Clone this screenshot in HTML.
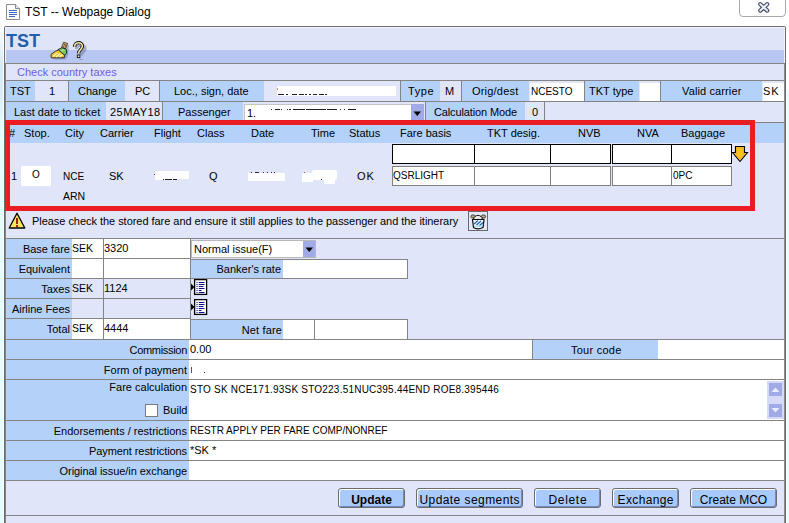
<!DOCTYPE html>
<html><head><meta charset="utf-8"><style>
html,body{margin:0;padding:0;width:789px;height:523px;overflow:hidden;background:#fff;position:relative}
body>div{position:absolute;box-sizing:content-box}
.t{white-space:nowrap;font-family:"Liberation Sans",sans-serif}
.btn{border:1px solid #6c6c6c;border-radius:3px;background:#a8cafc;box-shadow:inset 1px 1px 0 #fff,inset -1px -1px 0 #7888c0;
font-family:"Liberation Sans",sans-serif;font-size:12px;line-height:18px;text-align:center;color:#000;white-space:nowrap}
</style></head><body>
<div style="left:0px;top:26px;width:4px;height:497px;background:#e6fdff;"></div>
<div style="left:3px;top:26px;width:1px;height:497px;background:#ffffff;"></div>
<div style="left:786px;top:90px;width:3px;height:433px;background:#e6fdff;"></div>
<div style="left:786px;top:26px;width:1px;height:497px;background:#ffffff;"></div>
<div style="left:0px;top:26px;width:3px;height:104px;background:linear-gradient(#ffffff,#d4e8f6 40%,#dcf0fa 70%,#e6fdff);"></div>
<svg style="position:absolute;left:6px;top:4px" width="14" height="16" viewBox="0 0 14 16"><path d="M0.5 0.5 H9.5 L13.5 4.5 V15.5 H0.5 Z" fill="#fff" stroke="#8a8a8a"/><path d="M9.5 0.5 V4.5 H13.5" fill="#e8e8e8" stroke="#8a8a8a"/><path d="M3 6.5H11M3 8.5H11M3 10.5H11M3 12.5H9" stroke="#3a6cc8" stroke-width="1"/></svg>
<div class="t" style="left:25px;top:6px;font-size:12px;line-height:12px;font-weight:400;color:#000;">TST -- Webpage Dialog</div>
<div style="left:739px;top:-3px;width:45px;height:18px;border:1px solid #a9a9a9;border-radius:0 0 4px 4px;background:#fff"></div>
<svg style="position:absolute;left:757px;top:1px" width="14" height="12" viewBox="0 0 14 12"><path d="M3.3 3.2 L10.2 9.6 M10.2 3.2 L3.3 9.6" stroke="#3c4660" stroke-width="4.2" stroke-linecap="round"/><path d="M3.3 3.2 L10.2 9.6 M10.2 3.2 L3.3 9.6" stroke="#eceef4" stroke-width="2.1" stroke-linecap="round"/></svg>
<div style="left:4px;top:26px;width:782px;height:497px;background:#6e6e6e;border-radius:2px 2px 0 0"></div>
<div style="left:5px;top:27px;width:780px;height:496px;background:#f0f2ff;"></div>
<div style="left:6px;top:28px;width:778px;height:22px;background:#e0e4f8;"></div>
<div style="left:6px;top:50px;width:778px;height:13px;background:#b8c6f4;"></div>
<div style="left:5px;top:63px;width:780px;height:460px;background:#848484;"></div>
<div style="left:6px;top:64px;width:778px;height:459px;background:#e1e5fa;"></div>
<div style="left:784px;top:63px;width:1px;height:460px;background:#8a8a8a;"></div>
<div style="left:785px;top:63px;width:1px;height:460px;background:#646c6c;"></div>
<div style="left:4px;top:63px;width:1px;height:460px;background:#6a6a6a;"></div>
<div class="t" style="left:6px;top:32px;font-size:18px;line-height:18px;font-weight:700;color:#1f5fae;">TST</div>
<svg style="position:absolute;left:48px;top:38px" width="24" height="24" viewBox="0 0 24 24"><path d="M18 6 L21 7 L20.5 13 L19.5 19 L17.5 21.5 L5 21.5 L5 20.5 L17 18 Z" fill="#3a4470" opacity="0.3"/><path d="M15.5 4.3 L19.6 5.4 L17.4 10.8 L13.4 9.6 Z" fill="#c49a68" stroke="#2a2018" stroke-width="0.7"/><circle cx="16.6" cy="6.6" r="0.7" fill="#6a4a28"/><circle cx="17.8" cy="7.6" r="0.6" fill="#6a4a28"/><circle cx="15.6" cy="8.8" r="0.6" fill="#6a4a28"/><path d="M10 11.6 L14 9.8 L18.2 11 L18.7 15.2 L16.2 17.4 L12.8 15 Z" fill="#74c864" stroke="#101010" stroke-width="0.8"/><path d="M13 12 L15 13 M14.5 11.5 L16.5 12.5" stroke="#c8f0b8" stroke-width="0.8"/><path d="M3 16.4 L7.5 13.2 L10.5 12 L13.5 14.6 L16.6 17.2 L16.2 19.8 L3.2 19.8 Z" fill="#f2c428" stroke="#101010" stroke-width="0.8"/><path d="M5 18.5 L9 15 M8 19 L12 15.5 M11.5 19 L14.5 16.5" stroke="#fff6c8" stroke-width="1.2"/></svg>
<svg style="position:absolute;left:46px;top:36px" width="44" height="26" viewBox="0 0 44 26"><path d="M30.5 13 C30.5 8 39 7.8 39 12.5 C39 15.5 35 16 35 19.5 M35 23 v1" fill="none" stroke="#404a70" stroke-width="3.4" opacity="0.35"/><path d="M28.6 10.8 C28.6 5.5 36.4 5.3 36.4 10.3 C36.4 13.3 32.6 14 32.6 17.2" fill="none" stroke="#101010" stroke-width="3.4"/><path d="M28.6 10.8 C28.6 5.5 36.4 5.3 36.4 10.3 C36.4 13.3 32.6 14 32.6 17.2" fill="none" stroke="#f6f0a0" stroke-width="1.5"/><path d="M30.8 9.6 C31.2 7.8 34.2 7.8 34.4 9.9" fill="none" stroke="#8a8a9a" stroke-width="1.1"/><rect x="31.3" y="19" width="2.6" height="2.6" fill="#f6f0a0" stroke="#101010" stroke-width="0.9"/></svg>
<div class="t" style="left:17px;top:67px;font-size:11px;line-height:11px;font-weight:400;color:#6a5cf0;">Check country taxes</div>
<div style="left:6px;top:80px;width:778px;height:1px;background:#848484;"></div>
<div style="left:6px;top:81px;width:29px;height:20px;background:#b4d2f9;"></div>
<div style="left:35px;top:81px;width:33px;height:20px;background:#e1e5fa;"></div>
<div style="left:68px;top:81px;width:1px;height:20px;background:#848484;"></div>
<div style="left:69px;top:81px;width:56px;height:20px;background:#b4d2f9;"></div>
<div style="left:125px;top:81px;width:34px;height:20px;background:#e1e5fa;"></div>
<div style="left:159px;top:81px;width:1px;height:20px;background:#848484;"></div>
<div style="left:160px;top:81px;width:104px;height:20px;background:#b4d2f9;"></div>
<div style="left:264px;top:81px;width:136px;height:20px;background:#e1e5fa;"></div>
<div style="left:400px;top:81px;width:1px;height:20px;background:#848484;"></div>
<div style="left:277px;top:86px;width:119px;height:10px;background:#ffffff;"></div>
<div style="left:401px;top:81px;width:39px;height:20px;background:#b4d2f9;"></div>
<div style="left:440px;top:81px;width:21px;height:20px;background:#e1e5fa;"></div>
<div style="left:461px;top:81px;width:1px;height:20px;background:#848484;"></div>
<div style="left:462px;top:81px;width:67px;height:20px;background:#b4d2f9;"></div>
<div style="left:529px;top:81px;width:55px;height:20px;background:#e1e5fa;"></div>
<div style="left:530px;top:83px;width:54px;height:18px;background:#fff;"></div>
<div style="left:584px;top:81px;width:1px;height:20px;background:#848484;"></div>
<div style="left:585px;top:81px;width:54px;height:20px;background:#b4d2f9;"></div>
<div style="left:639px;top:81px;width:21px;height:20px;background:#e1e5fa;"></div>
<div style="left:640px;top:83px;width:20px;height:18px;background:#fff;"></div>
<div style="left:660px;top:81px;width:1px;height:20px;background:#848484;"></div>
<div style="left:661px;top:81px;width:101px;height:20px;background:#b4d2f9;"></div>
<div style="left:762px;top:81px;width:22px;height:20px;background:#e1e5fa;"></div>
<div style="left:763px;top:83px;width:21px;height:18px;background:#fff;"></div>
<div style="left:6px;top:101px;width:778px;height:1px;background:#848484;"></div>
<div class="t" style="left:10px;top:86px;font-size:11px;line-height:11px;font-weight:400;color:#000;">TST</div>
<div class="t" style="left:49px;top:86px;font-size:11px;line-height:11px;font-weight:400;color:#000;">1</div>
<div class="t" style="left:78px;top:86px;font-size:11px;line-height:11px;font-weight:400;color:#000;">Change</div>
<div class="t" style="left:135px;top:86px;font-size:11px;line-height:11px;font-weight:400;color:#000;">PC</div>
<div class="t" style="left:174px;top:86px;font-size:11px;line-height:11px;font-weight:400;color:#000;">Loc., sign, date</div>
<div class="t" style="left:408px;top:86px;font-size:11px;line-height:11px;font-weight:400;color:#000;letter-spacing:0.6px">Type</div>
<div class="t" style="left:445px;top:86px;font-size:11px;line-height:11px;font-weight:400;color:#000;">M</div>
<div class="t" style="left:472px;top:86px;font-size:11px;line-height:11px;font-weight:400;color:#000;letter-spacing:0.2px">Orig/dest</div>
<div class="t" style="left:531px;top:87px;font-size:10px;line-height:10px;font-weight:400;color:#000;">NCESTO</div>
<div class="t" style="left:589px;top:86px;font-size:11px;line-height:11px;font-weight:400;color:#000;">TKT type</div>
<div class="t" style="left:682px;top:86px;font-size:11px;line-height:11px;font-weight:400;color:#000;letter-spacing:0.12px">Valid carrier</div>
<div class="t" style="left:763px;top:86px;font-size:11px;line-height:11px;font-weight:400;color:#000;letter-spacing:1px">SK</div>
<div style="left:278px;top:94px;width:6px;height:1px;background:#202020;"></div>
<div style="left:286px;top:94px;width:2px;height:1px;background:#202020;"></div>
<div style="left:292px;top:94px;width:5px;height:1px;background:#202020;"></div>
<div style="left:299px;top:94px;width:5px;height:1px;background:#202020;"></div>
<div style="left:305px;top:94px;width:2px;height:1px;background:#202020;"></div>
<div style="left:309px;top:94px;width:2px;height:1px;background:#202020;"></div>
<div style="left:313px;top:94px;width:4px;height:1px;background:#202020;"></div>
<div style="left:319px;top:94px;width:5px;height:1px;background:#202020;"></div>
<div style="left:325px;top:94px;width:2px;height:1px;background:#202020;"></div>
<div style="left:277px;top:88px;width:1px;height:2px;background:#e0a040;"></div>
<div style="left:6px;top:102px;width:100px;height:20px;background:#b4d2f9;"></div>
<div style="left:106px;top:102px;width:56px;height:20px;background:#e1e5fa;"></div>
<div style="left:162px;top:102px;width:1px;height:20px;background:#848484;"></div>
<div style="left:163px;top:102px;width:80px;height:20px;background:#b4d2f9;"></div>
<div style="left:243px;top:102px;width:183px;height:20px;background:#e1e5fa;"></div>
<div style="left:244px;top:104px;width:167px;height:17px;background:#fff;"></div>
<div style="left:244px;top:104px;width:167px;height:1px;background:#c4c4c4;"></div>
<div style="left:244px;top:104px;width:1px;height:17px;background:#c4c4c4;"></div>
<div style="left:411px;top:104px;width:13px;height:17px;background:#a0aae6;"></div>
<svg style="position:absolute;left:413px;top:111px" width="9" height="6" viewBox="0 0 9 6"><path d="M0.5 0.5 H8 L4.25 5 Z" fill="#000"/></svg>
<div style="left:425px;top:102px;width:1px;height:20px;background:#848484;"></div>
<div style="left:426px;top:102px;width:99px;height:20px;background:#b4d2f9;"></div>
<div style="left:525px;top:102px;width:19px;height:20px;background:#e1e5fa;"></div>
<div style="left:544px;top:102px;width:1px;height:20px;background:#848484;"></div>
<div style="left:6px;top:122px;width:778px;height:1px;background:#848484;"></div>
<div class="t" style="left:14px;top:107px;font-size:11px;line-height:11px;font-weight:400;color:#000;">Last date to ticket</div>
<div class="t" style="left:110px;top:107px;font-size:11px;line-height:11px;font-weight:400;color:#000;letter-spacing:0.45px">25MAY18</div>
<div class="t" style="left:178px;top:107px;font-size:11px;line-height:11px;font-weight:400;color:#000;">Passenger</div>
<div class="t" style="left:247px;top:108px;font-size:11px;line-height:11px;font-weight:400;color:#000;">1.</div>
<div class="t" style="left:434px;top:107px;font-size:11px;line-height:11px;font-weight:400;color:#000;letter-spacing:-0.13px">Calculation Mode</div>
<div class="t" style="left:532px;top:107px;font-size:11px;line-height:11px;font-weight:400;color:#000;">0</div>
<div style="left:271px;top:109px;width:1px;height:1px;background:#202020;"></div>
<div style="left:275px;top:109px;width:5px;height:1px;background:#202020;"></div>
<div style="left:281px;top:109px;width:1px;height:1px;background:#202020;"></div>
<div style="left:287px;top:109px;width:1px;height:1px;background:#202020;"></div>
<div style="left:289px;top:109px;width:2px;height:1px;background:#202020;"></div>
<div style="left:293px;top:109px;width:5px;height:1px;background:#202020;"></div>
<div style="left:298px;top:109px;width:7px;height:1px;background:#202020;"></div>
<div style="left:306px;top:109px;width:10px;height:1px;background:#202020;"></div>
<div style="left:316px;top:109px;width:10px;height:1px;background:#202020;"></div>
<div style="left:327px;top:109px;width:10px;height:1px;background:#202020;"></div>
<div style="left:340px;top:109px;width:1px;height:1px;background:#202020;"></div>
<div style="left:344px;top:109px;width:1px;height:1px;background:#202020;"></div>
<div style="left:348px;top:109px;width:8px;height:1px;background:#202020;"></div>
<div style="left:6px;top:123px;width:778px;height:20px;background:#b4d2f9;"></div>
<div style="left:6px;top:143px;width:778px;height:95px;background:#e1e5fa;"></div>
<div class="t" style="left:9px;top:128px;font-size:11px;line-height:11px;font-weight:400;color:#000;">#</div>
<div class="t" style="left:24px;top:128px;font-size:11px;line-height:11px;font-weight:400;color:#000;">Stop.</div>
<div class="t" style="left:65px;top:128px;font-size:11px;line-height:11px;font-weight:400;color:#000;">City</div>
<div class="t" style="left:100px;top:128px;font-size:11px;line-height:11px;font-weight:400;color:#000;">Carrier</div>
<div class="t" style="left:154px;top:128px;font-size:11px;line-height:11px;font-weight:400;color:#000;">Flight</div>
<div class="t" style="left:197px;top:128px;font-size:11px;line-height:11px;font-weight:400;color:#000;">Class</div>
<div class="t" style="left:251px;top:128px;font-size:11px;line-height:11px;font-weight:400;color:#000;">Date</div>
<div class="t" style="left:311px;top:128px;font-size:11px;line-height:11px;font-weight:400;color:#000;">Time</div>
<div class="t" style="left:349px;top:128px;font-size:11px;line-height:11px;font-weight:400;color:#000;">Status</div>
<div class="t" style="left:400px;top:128px;font-size:11px;line-height:11px;font-weight:400;color:#000;">Fare basis</div>
<div class="t" style="left:487px;top:128px;font-size:11px;line-height:11px;font-weight:400;color:#000;">TKT desig.</div>
<div class="t" style="left:578px;top:128px;font-size:11px;line-height:11px;font-weight:400;color:#000;">NVB</div>
<div class="t" style="left:637px;top:128px;font-size:11px;line-height:11px;font-weight:400;color:#000;">NVA</div>
<div class="t" style="left:681px;top:128px;font-size:11px;line-height:11px;font-weight:400;color:#000;">Baggage</div>
<div style="left:392px;top:144px;width:81px;height:18px;background:#fff;border:1px solid #000;"></div>
<div style="left:474px;top:144px;width:75px;height:18px;background:#fff;border:1px solid #000;"></div>
<div style="left:550px;top:144px;width:59px;height:18px;background:#fff;border:1px solid #000;"></div>
<div style="left:612px;top:144px;width:58px;height:18px;background:#fff;border:1px solid #000;"></div>
<div style="left:671px;top:144px;width:59px;height:18px;background:#fff;border:1px solid #000;"></div>
<div style="left:392px;top:166px;width:81px;height:18px;background:#fff;border:1px solid #808080;"></div>
<div style="left:474px;top:166px;width:75px;height:18px;background:#fff;border:1px solid #808080;"></div>
<div style="left:550px;top:166px;width:59px;height:18px;background:#fff;border:1px solid #808080;"></div>
<div style="left:612px;top:166px;width:58px;height:18px;background:#fff;border:1px solid #808080;"></div>
<div style="left:671px;top:166px;width:59px;height:18px;background:#fff;border:1px solid #808080;"></div>
<svg style="position:absolute;left:732px;top:146px" width="17" height="17" viewBox="0 0 17 17"><path d="M3.5 0.5 H12.5 V6.5 H15.5 L8 15.5 L0.5 6.5 H3.5 Z" fill="#f8c418" stroke="#000" stroke-width="1.1"/><path d="M4.8 1.8 H11.2 V7.8 H12.8 L8 13.5 L3.2 7.8 H4.8 Z" fill="none" stroke="#f0a838" stroke-width="1"/></svg>
<div class="t" style="left:11px;top:171px;font-size:11px;line-height:11px;font-weight:400;color:#000;">1</div>
<div style="left:21px;top:166px;width:30px;height:20px;background:#fff;"></div>
<div class="t" style="left:32px;top:170px;font-size:10px;line-height:10px;font-weight:400;color:#000;">O</div>
<div class="t" style="left:63px;top:172px;font-size:10px;line-height:10px;font-weight:400;color:#000;">NCE</div>
<div class="t" style="left:109px;top:171px;font-size:11px;line-height:11px;font-weight:400;color:#000;">SK</div>
<div class="t" style="left:209px;top:171px;font-size:11px;line-height:11px;font-weight:400;color:#000;">Q</div>
<div class="t" style="left:357px;top:171px;font-size:11px;line-height:11px;font-weight:400;color:#000;letter-spacing:1px">OK</div>
<div class="t" style="left:63px;top:191px;font-size:10.5px;line-height:10.5px;font-weight:400;color:#000;">ARN</div>
<div class="t" style="left:393px;top:171px;font-size:10px;line-height:10px;font-weight:400;color:#000;">QSRLIGHT</div>
<div class="t" style="left:673px;top:171px;font-size:10px;line-height:10px;font-weight:400;color:#000;">0PC</div>
<div style="left:155px;top:171px;width:34px;height:8px;background:#fff;"></div>
<div style="left:155px;top:179px;width:8px;height:1px;background:#fff;"></div>
<div style="left:163px;top:179px;width:1px;height:1px;background:#202020;"></div>
<div style="left:165px;top:179px;width:7px;height:1px;background:#202020;"></div>
<div style="left:173px;top:179px;width:4px;height:1px;background:#202020;"></div>
<div style="left:154px;top:174px;width:1px;height:1px;background:#803060;"></div>
<div style="left:248px;top:173px;width:37px;height:8px;background:#fff;"></div>
<div style="left:251px;top:172px;width:1px;height:1px;background:#302050;"></div>
<div style="left:255px;top:172px;width:4px;height:1px;background:#302050;"></div>
<div style="left:263px;top:172px;width:1px;height:1px;background:#302050;"></div>
<div style="left:267px;top:172px;width:1px;height:1px;background:#302050;"></div>
<div style="left:271px;top:172px;width:1px;height:1px;background:#302050;"></div>
<div style="left:274px;top:172px;width:1px;height:1px;background:#302050;"></div>
<div style="left:302px;top:173px;width:11px;height:9px;background:#fff;"></div>
<div style="left:312px;top:170px;width:25px;height:10px;background:#fff;border-radius:2px"></div>
<div style="left:324px;top:179px;width:11px;height:5px;background:#fff;"></div>
<div style="left:304px;top:172px;width:1px;height:1px;background:#b06020;"></div>
<div style="left:321px;top:179px;width:1px;height:1px;background:#303080;"></div>
<div style="left:5px;top:120px;width:740px;height:81px;border:5px solid #ec1c24"></div>
<svg style="position:absolute;left:8px;top:212px" width="18" height="18" viewBox="0 0 18 18"><path d="M9 1.2 L16.8 16 H1.2 Z" fill="#f8e858" stroke="#000" stroke-width="1.3" stroke-linejoin="round"/><rect x="8" y="6" width="2" height="6" fill="#a02800"/><rect x="8" y="13" width="2" height="2" fill="#a02800"/></svg>
<div class="t" style="left:32px;top:216px;font-size:11px;line-height:11px;font-weight:400;color:#000;letter-spacing:-0.04px">Please check the stored fare and ensure it still applies to the passenger and the itinerary</div>
<div style="left:468px;top:211px;width:18px;height:18px;background:#e4e8fa;border:1px solid #6a6a6a;"></div>
<svg style="position:absolute;left:469px;top:212px" width="18" height="18" viewBox="0 0 18 18"><ellipse cx="4" cy="4.5" rx="2.2" ry="1.6" fill="#c0a880" stroke="#202020" stroke-width="0.8"/><ellipse cx="14.5" cy="4.5" rx="2.2" ry="1.6" fill="#c0a880" stroke="#202020" stroke-width="0.8"/><path d="M4.5 7.5 C5 2 13 2 13.5 7.5 Z" fill="#e8e8e8" stroke="#101010" stroke-width="1"/><path d="M3.5 7.5 H15 L14 15.5 C11 17 7 17 4.5 15.5 Z" fill="#f4f8ff" stroke="#101010" stroke-width="1.2"/><path d="M5 12 L9 8.5 M7.5 13 L12 9 M10.5 13.5 L14 10.5" stroke="#2060b0" stroke-width="1.2"/><path d="M5 14.3 H13" stroke="#a0e0f0" stroke-width="1.4"/></svg>
<div style="left:6px;top:238px;width:778px;height:1px;background:#848484;"></div>
<div style="left:6px;top:239px;width:66px;height:19px;background:#b4d2f9;"></div>
<div style="left:72px;top:239px;width:31px;height:19px;background:#fff;"></div>
<div style="left:103px;top:239px;width:1px;height:19px;background:#848484;"></div>
<div style="left:104px;top:239px;width:86px;height:19px;background:#fff;"></div>
<div style="left:190px;top:239px;width:1px;height:19px;background:#848484;"></div>
<div style="left:6px;top:258px;width:185px;height:1px;background:#848484;"></div>
<div class="t" style="right:719px;text-align:right;top:244px;font-size:11px;line-height:11px;font-weight:400;color:#000;">Base fare</div>
<div class="t" style="left:72px;top:243px;font-size:10.5px;line-height:10.5px;font-weight:400;color:#000;">SEK</div>
<div class="t" style="left:104px;top:243px;font-size:11px;line-height:11px;font-weight:400;color:#000;">3320</div>
<div style="left:6px;top:259px;width:66px;height:19px;background:#b4d2f9;"></div>
<div style="left:72px;top:259px;width:31px;height:19px;background:#fff;"></div>
<div style="left:103px;top:259px;width:1px;height:19px;background:#848484;"></div>
<div style="left:104px;top:259px;width:86px;height:19px;background:#fff;"></div>
<div style="left:190px;top:259px;width:1px;height:19px;background:#848484;"></div>
<div style="left:6px;top:278px;width:185px;height:1px;background:#848484;"></div>
<div class="t" style="right:719px;text-align:right;top:264px;font-size:11px;line-height:11px;font-weight:400;color:#000;">Equivalent</div>
<div style="left:6px;top:279px;width:66px;height:19px;background:#b4d2f9;"></div>
<div style="left:72px;top:279px;width:31px;height:19px;background:#e1e5fa;"></div>
<div style="left:103px;top:279px;width:1px;height:19px;background:#848484;"></div>
<div style="left:104px;top:279px;width:86px;height:19px;background:#e1e5fa;"></div>
<div style="left:190px;top:279px;width:1px;height:19px;background:#848484;"></div>
<div style="left:6px;top:298px;width:185px;height:1px;background:#848484;"></div>
<div class="t" style="right:719px;text-align:right;top:284px;font-size:11px;line-height:11px;font-weight:400;color:#000;">Taxes</div>
<div class="t" style="left:72px;top:283px;font-size:10.5px;line-height:10.5px;font-weight:400;color:#000;">SEK</div>
<div class="t" style="left:104px;top:283px;font-size:11px;line-height:11px;font-weight:400;color:#000;">1124</div>
<div style="left:6px;top:299px;width:66px;height:19px;background:#b4d2f9;"></div>
<div style="left:72px;top:299px;width:31px;height:19px;background:#e1e5fa;"></div>
<div style="left:103px;top:299px;width:1px;height:19px;background:#848484;"></div>
<div style="left:104px;top:299px;width:86px;height:19px;background:#e1e5fa;"></div>
<div style="left:190px;top:299px;width:1px;height:19px;background:#848484;"></div>
<div style="left:6px;top:318px;width:185px;height:1px;background:#848484;"></div>
<div class="t" style="right:719px;text-align:right;top:304px;font-size:11px;line-height:11px;font-weight:400;color:#000;">Airline Fees</div>
<div style="left:6px;top:319px;width:66px;height:20px;background:#b4d2f9;"></div>
<div style="left:72px;top:319px;width:31px;height:20px;background:#fff;"></div>
<div style="left:103px;top:319px;width:1px;height:20px;background:#848484;"></div>
<div style="left:104px;top:319px;width:86px;height:20px;background:#fff;"></div>
<div style="left:190px;top:319px;width:1px;height:20px;background:#848484;"></div>
<div style="left:6px;top:339px;width:185px;height:1px;background:#848484;"></div>
<div class="t" style="right:719px;text-align:right;top:324px;font-size:11px;line-height:11px;font-weight:400;color:#000;">Total</div>
<div class="t" style="left:72px;top:323px;font-size:10.5px;line-height:10.5px;font-weight:400;color:#000;">SEK</div>
<div class="t" style="left:104px;top:323px;font-size:11px;line-height:11px;font-weight:400;color:#000;">4444</div>
<div style="left:191px;top:240px;width:123px;height:16px;background:#fff;border:1px solid #b8b8b8;"></div>
<div style="left:303px;top:241px;width:12px;height:16px;background:#a0aae6;"></div>
<svg style="position:absolute;left:305px;top:247px" width="9" height="6" viewBox="0 0 9 6"><path d="M0.5 0.5 H8 L4.25 5 Z" fill="#000"/></svg>
<div class="t" style="left:194px;top:244px;font-size:11px;line-height:11px;font-weight:400;color:#000;">Normal issue(F)</div>
<div style="left:190px;top:259px;width:216px;height:18px;background:#fff;border:1px solid #848484;"></div>
<div style="left:191px;top:260px;width:92px;height:18px;background:#b4d2f9;"></div>
<div class="t" style="right:508px;text-align:right;top:264px;font-size:11px;line-height:11px;font-weight:400;color:#000;">Banker's rate</div>
<svg style="position:absolute;left:191px;top:279px" width="17" height="17" viewBox="0 0 17 17"><path d="M0 4.5 L3.5 8 L0 11.5 Z" fill="#000"/><rect x="3.6" y="0.6" width="12" height="14.8" fill="#fff" stroke="#000" stroke-width="1.3"/><path d="M5.5 3.5H6.6M7.8 3.5H13.5M5.5 5.5H6.6M7.8 5.5H13.5M5.5 7.5H6.6M7.8 7.5H12.5M5.5 9.5H6.6M7.8 9.5H13.5M5.5 11.5H6.6M7.8 11.5H10.5M5.5 13.5H6.6M7.8 13.5H13.5" stroke="#101090" stroke-width="1.1"/></svg>
<svg style="position:absolute;left:191px;top:299px" width="17" height="17" viewBox="0 0 17 17"><path d="M0 4.5 L3.5 8 L0 11.5 Z" fill="#000"/><rect x="3.6" y="0.6" width="12" height="14.8" fill="#fff" stroke="#000" stroke-width="1.3"/><path d="M5.5 3.5H6.6M7.8 3.5H13.5M5.5 5.5H6.6M7.8 5.5H13.5M5.5 7.5H6.6M7.8 7.5H12.5M5.5 9.5H6.6M7.8 9.5H13.5M5.5 11.5H6.6M7.8 11.5H10.5M5.5 13.5H6.6M7.8 13.5H13.5" stroke="#101090" stroke-width="1.1"/></svg>
<div style="left:190px;top:319px;width:216px;height:19px;background:#fff;border:1px solid #848484;"></div>
<div style="left:191px;top:320px;width:92px;height:19px;background:#b4d2f9;"></div>
<div style="left:314px;top:320px;width:1px;height:19px;background:#848484;"></div>
<div class="t" style="right:507px;text-align:right;top:325px;font-size:11px;line-height:11px;font-weight:400;color:#000;letter-spacing:0.15px">Net fare</div>
<div style="left:6px;top:339px;width:778px;height:1px;background:#848484;"></div>
<div style="left:6px;top:340px;width:183px;height:19px;background:#b4d2f9;"></div>
<div style="left:189px;top:340px;width:595px;height:19px;background:#fff;"></div>
<div style="left:6px;top:359px;width:778px;height:1px;background:#848484;"></div>
<div class="t" style="right:602px;text-align:right;top:345px;font-size:11px;line-height:11px;font-weight:400;color:#000;letter-spacing:-0.3px">Commission</div>
<div class="t" style="left:190px;top:344px;font-size:11px;line-height:11px;font-weight:400;color:#000;">0.00</div>
<div style="left:6px;top:360px;width:183px;height:19px;background:#b4d2f9;"></div>
<div style="left:189px;top:360px;width:595px;height:19px;background:#fff;"></div>
<div style="left:6px;top:379px;width:778px;height:1px;background:#848484;"></div>
<div class="t" style="right:602px;text-align:right;top:365px;font-size:11px;line-height:11px;font-weight:400;color:#000;">Form of payment</div>
<div style="left:6px;top:380px;width:183px;height:40px;background:#b4d2f9;"></div>
<div style="left:189px;top:380px;width:595px;height:40px;background:#fff;"></div>
<div style="left:6px;top:420px;width:778px;height:1px;background:#848484;"></div>
<div class="t" style="right:602px;text-align:right;top:382px;font-size:11px;line-height:11px;font-weight:400;color:#000;">Fare calculation</div>
<div class="t" style="left:190px;top:385px;font-size:10px;line-height:10px;font-weight:400;color:#000;letter-spacing:0.22px">STO SK NCE171.93SK STO223.51NUC395.44END ROE8.395446</div>
<div style="left:6px;top:421px;width:183px;height:19px;background:#b4d2f9;"></div>
<div style="left:189px;top:421px;width:595px;height:19px;background:#fff;"></div>
<div style="left:6px;top:440px;width:778px;height:1px;background:#848484;"></div>
<div class="t" style="right:602px;text-align:right;top:426px;font-size:11px;line-height:11px;font-weight:400;color:#000;">Endorsements / restrictions</div>
<div class="t" style="left:190px;top:426px;font-size:10px;line-height:10px;font-weight:400;color:#000;">RESTR APPLY PER FARE COMP/NONREF</div>
<div style="left:6px;top:441px;width:183px;height:19px;background:#b4d2f9;"></div>
<div style="left:189px;top:441px;width:595px;height:19px;background:#fff;"></div>
<div style="left:6px;top:460px;width:778px;height:1px;background:#848484;"></div>
<div class="t" style="right:602px;text-align:right;top:446px;font-size:11px;line-height:11px;font-weight:400;color:#000;letter-spacing:-0.08px">Payment restrictions</div>
<div class="t" style="left:190px;top:445px;font-size:11px;line-height:11px;font-weight:400;color:#000;">*SK *</div>
<div style="left:6px;top:461px;width:183px;height:19px;background:#b4d2f9;"></div>
<div style="left:189px;top:461px;width:595px;height:19px;background:#fff;"></div>
<div style="left:6px;top:480px;width:778px;height:1px;background:#848484;"></div>
<div class="t" style="right:602px;text-align:right;top:466px;font-size:11px;line-height:11px;font-weight:400;color:#000;letter-spacing:-0.06px">Original issue/in exchange</div>
<div style="left:532px;top:340px;width:1px;height:19px;background:#848484;"></div>
<div style="left:533px;top:340px;width:125px;height:19px;background:#b4d2f9;"></div>
<div class="t" style="left:571px;top:345px;font-size:11px;line-height:11px;font-weight:400;color:#000;letter-spacing:0.25px">Tour code</div>
<div style="left:191px;top:367px;width:1px;height:6px;background:#705030;"></div>
<div style="left:204px;top:372px;width:1px;height:1px;background:#404040;"></div>
<div style="left:145px;top:404px;width:11px;height:11px;background:#fff;border:1px solid #7a7a7a;"></div>
<div class="t" style="left:163px;top:405px;font-size:11px;line-height:11px;font-weight:400;color:#000;">Build</div>
<div style="left:767px;top:381px;width:17px;height:38px;background:#d4daf8;"></div>
<div style="left:769px;top:383px;width:13px;height:13px;background:#a0aae6;"></div>
<div style="left:769px;top:404px;width:13px;height:13px;background:#a0aae6;"></div>
<svg style="position:absolute;left:769px;top:383px" width="13" height="34" viewBox="0 0 13 34"><path d="M2.5 9 L6.5 4.5 L10.5 9 Z" fill="#e8ecff"/><path d="M2.5 25 L6.5 29.5 L10.5 25 Z" fill="#e8ecff"/></svg>
<div style="left:6px;top:481px;width:778px;height:34px;background:#e1e5fa;"></div>
<div style="left:6px;top:515px;width:778px;height:1px;background:#848484;"></div>
<div class="btn" style="left:338px;top:488px;width:65px;height:16px;padding-top:2px;font-weight:700;letter-spacing:0px;text-indent:0px">Update</div>
<div class="btn" style="left:416px;top:488px;width:105px;height:16px;padding-top:2px;font-weight:400;letter-spacing:0.43px;text-indent:0.43px">Update segments</div>
<div class="btn" style="left:534px;top:488px;width:65px;height:16px;padding-top:2px;font-weight:400;letter-spacing:0.7px;text-indent:0.7px">Delete</div>
<div class="btn" style="left:612px;top:488px;width:65px;height:16px;padding-top:2px;font-weight:400;letter-spacing:0.36px;text-indent:0.36px">Exchange</div>
<div class="btn" style="left:690px;top:488px;width:85px;height:16px;padding-top:2px;font-weight:400;letter-spacing:0px;text-indent:0px">Create MCO</div>
</body></html>
